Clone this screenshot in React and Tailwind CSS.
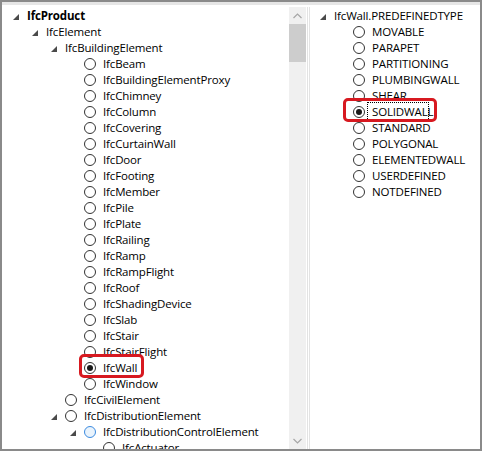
import React from "react";

const FONT = { fontFamily: '"Segoe UI", "Open Sans", "Noto Sans", sans-serif' };

const PL_LEFT = ["pl-[6px]", "pl-[25px]", "pl-[44px]", "pl-[63px]", "pl-[82px]"];
const PL_RIGHT = ["pl-[4px]", "pl-[23px]"];

function Tri() {
  return (
    <svg width="6" height="6" viewBox="0 0 6 6" className="ml-[5px] mt-[1px]">
      <polygon points="6,0 6,6 0,6" fill="#4a4a4a" />
    </svg>
  );
}

function Radio({ checked, hover }) {
  return (
    <span
      className={
        "flex h-[12px] w-[12px] shrink-0 items-center justify-center rounded-full border " +
        (hover ? "border-[#3c8be0] bg-[#e9f3fc]" : "border-[#333333] bg-white")
      }
    >
      {checked && <span className="h-[6px] w-[6px] rounded-full bg-[#1a1a1a]" />}
    </span>
  );
}

function Row({ pl, expander, radio, checked, hover, label, bold, mark, focus }) {
  return (
    <div className={"flex h-4 items-center whitespace-nowrap " + pl}>
      <span className="flex h-4 w-[19px] shrink-0 items-center">{expander && <Tri />}</span>
      <span className="relative flex items-center">
        {radio && <Radio checked={checked} hover={hover} />}
        <span className={"relative leading-4 " + (radio ? "ml-[7px] " : "") + (bold ? "font-bold" : "")}>
          {label}
          {focus && (
            <span className="absolute left-[-5px] top-[-2px] h-[19px] w-[62px] border border-dotted border-black" />
          )}
        </span>
        {mark === "wall" && (
          <span className="absolute left-[-5px] top-[-6px] h-[24px] w-[65px] rounded-[5px] border-[3px] border-[#d71920]" />
        )}
        {mark === "solid" && (
          <span className="absolute left-[-10px] top-[-6px] h-[24px] w-[94px] rounded-[5px] border-[3px] border-[#d71920]" />
        )}
      </span>
    </div>
  );
}

const leftItems = [
  { l: 0, e: true, label: "IfcProduct", bold: true },
  { l: 1, e: true, label: "IfcElement" },
  { l: 2, e: true, label: "IfcBuildingElement" },
  ...[
    "IfcBeam",
    "IfcBuildingElementProxy",
    "IfcChimney",
    "IfcColumn",
    "IfcCovering",
    "IfcCurtainWall",
    "IfcDoor",
    "IfcFooting",
    "IfcMember",
    "IfcPile",
    "IfcPlate",
    "IfcRailing",
    "IfcRamp",
    "IfcRampFlight",
    "IfcRoof",
    "IfcShadingDevice",
    "IfcSlab",
    "IfcStair",
    "IfcStairFlight",
  ].map((label) => ({ l: 3, r: true, label })),
  { l: 3, r: true, checked: true, label: "IfcWall", mark: "wall" },
  { l: 3, r: true, label: "IfcWindow" },
  { l: 2, r: true, label: "IfcCivilElement" },
  { l: 2, e: true, r: true, label: "IfcDistributionElement" },
  { l: 3, e: true, r: true, hover: true, label: "IfcDistributionControlElement" },
  { l: 4, r: true, label: "IfcActuator" },
];

const rightItems = [
  "MOVABLE",
  "PARAPET",
  "PARTITIONING",
  "PLUMBINGWALL",
  "SHEAR",
  "SOLIDWALL",
  "STANDARD",
  "POLYGONAL",
  "ELEMENTEDWALL",
  "USERDEFINED",
  "NOTDEFINED",
];

function Chevron({ up }) {
  return (
    <svg width="9" height="6" viewBox="0 0 9 6">
      <polyline
        points={up ? "0.5,5 4.5,1 8.5,5" : "0.5,1 4.5,5 8.5,1"}
        fill="none"
        stroke="#a6a6a6"
        strokeWidth="1.2"
      />
    </svg>
  );
}

export default function App() {
  return (
    <div
      className="flex h-[451px] w-[482px] flex-col overflow-hidden border-2 border-[#8a8a8a] bg-white text-[11.5px] tracking-[-0.15px] text-black"
      style={FONT}
    >
      <div className="h-[3px] shrink-0 bg-[#e6e6e6]" />
      <div className="h-[2px] shrink-0 bg-white" />
      <div className="flex min-h-0 flex-1">
        {/* left tree */}
        <div className="min-w-0 w-[287px] overflow-hidden pt-[1px]">
          {leftItems.map((it, i) => (
            <Row
              key={i}
              pl={PL_LEFT[it.l]}
              expander={it.e}
              radio={it.r}
              checked={it.checked}
              hover={it.hover}
              label={it.label}
              bold={it.bold}
              mark={it.mark}
            />
          ))}
        </div>
        {/* scrollbar */}
        <div className="flex w-[17px] shrink-0 flex-col bg-[#f0f0f0]">
          <div className="flex h-[17px] items-center justify-center">
            <Chevron up />
          </div>
          <div className="h-[38px] bg-[#cdcdcd]" />
          <div className="flex-1" />
          <div className="flex h-[17px] items-center justify-center">
            <Chevron />
          </div>
        </div>
        {/* splitter */}
        <div className="flex w-[5px] shrink-0">
          <div className="w-[1px] bg-white" />
          <div className="w-[1px] bg-[#e3e3e3]" />
          <div className="w-[1px] bg-white" />
          <div className="w-[1px] bg-[#e3e3e3]" />
          <div className="w-[1px] bg-white" />
        </div>
        {/* right tree */}
        <div className="min-w-0 flex-1 overflow-hidden pt-[1px]">
          <Row pl={PL_RIGHT[0]} expander label="IfcWall.PREDEFINEDTYPE" />
          {rightItems.map((label) => (
            <Row
              key={label}
              pl={PL_RIGHT[1]}
              radio
              checked={label === "SOLIDWALL"}
              label={label}
              mark={label === "SOLIDWALL" ? "solid" : undefined}
              focus={label === "SOLIDWALL"}
            />
          ))}
        </div>
      </div>
    </div>
  );
}
